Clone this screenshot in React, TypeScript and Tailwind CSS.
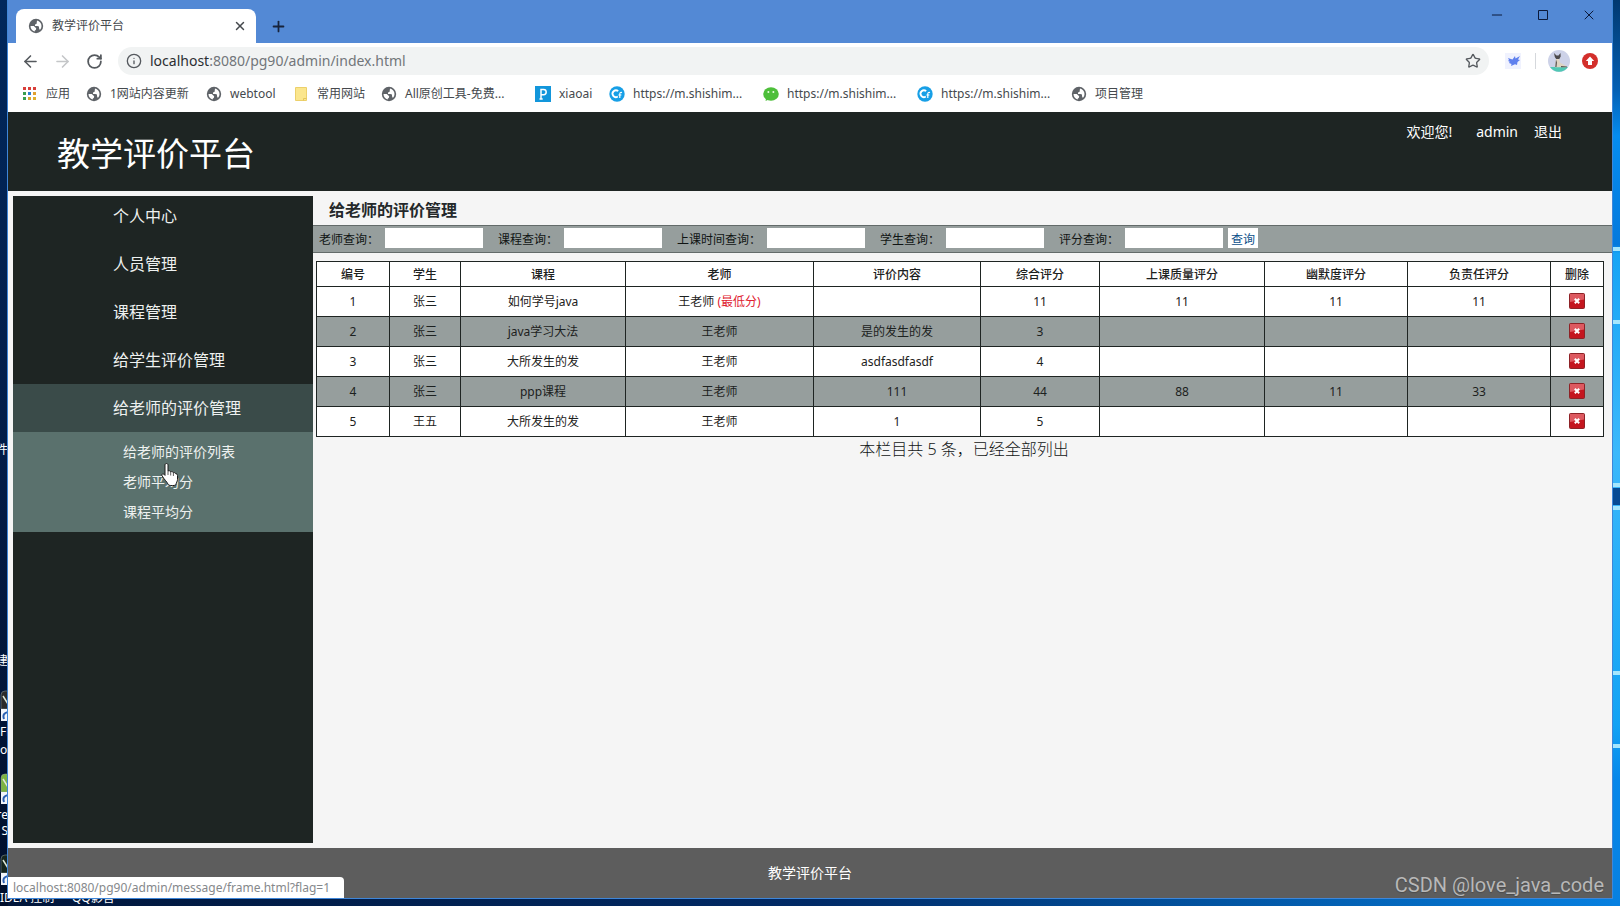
import React from 'react';
import { ArrowLeft, ArrowRight, Info, Minus, Plus, RotateCw, Star, X } from 'lucide-react';

type Bookmark = { label: string; icon: 'globe' | 'folder' | 'p' | 'c' | 'chat'; className: string };

const bookmarks: Bookmark[] = [
  { label: '1网站内容更新', icon: 'globe', className: 'w-[120px]' },
  { label: 'webtool', icon: 'globe', className: 'w-[87px]' },
  { label: '常用网站', icon: 'folder', className: 'w-[88px]' },
  { label: 'All原创工具-免费...', icon: 'globe', className: 'w-[154px]' },
  { label: 'xiaoai', icon: 'p', className: 'w-[74px]' },
  { label: 'https://m.shishim...', icon: 'c', className: 'w-[154px]' },
  { label: 'https://m.shishim...', icon: 'chat', className: 'w-[154px]' },
  { label: 'https://m.shishim...', icon: 'c', className: 'w-[154px]' },
  { label: '项目管理', icon: 'globe', className: 'w-[100px]' },
];

const menu = ['个人中心', '人员管理', '课程管理', '给学生评价管理', '给老师的评价管理'];
const submenu = ['给老师的评价列表', '老师平均分', '课程平均分'];
const filters = ['老师查询：', '课程查询：', '上课时间查询：', '学生查询：', '评分查询：'];

const columns = [
  { title: '编号', width: 'w-[73px]' },
  { title: '学生', width: 'w-[71px]' },
  { title: '课程', width: 'w-[165px]' },
  { title: '老师', width: 'w-[188px]' },
  { title: '评价内容', width: 'w-[167px]' },
  { title: '综合评分', width: 'w-[119px]' },
  { title: '上课质量评分', width: 'w-[165px]' },
  { title: '幽默度评分', width: 'w-[143px]' },
  { title: '负责任评分', width: 'w-[143px]' },
  { title: '删除', width: 'w-[53px]' },
];

const rows = [
  { cells: ['1', '张三', '如何学号java', '王老师', '', '11', '11', '11', '11'], lowest: true },
  { cells: ['2', '张三', 'java学习大法', '王老师', '是的发生的发', '3', '', '', ''] },
  { cells: ['3', '张三', '大所发生的发', '王老师', 'asdfasdfasdf', '4', '', '', ''] },
  { cells: ['4', '张三', 'ppp课程', '王老师', '111', '44', '88', '11', '33'] },
  { cells: ['5', '王五', '大所发生的发', '王老师', '1', '5', '', '', ''] },
];

const GlobeIcon = () => (
  <svg viewBox="0 0 16 16" className="size-4 shrink-0">
    <circle cx="8" cy="8" r="7.2" fill="#5f6368" />
    <path d="M2.5 8h3.3l2.400 2.200-.4 1.800-1 .6v1C4.200 13 2.500 10.700 2.500 8Z" fill="#fff" />
    <path d="M9 2.600c2.600.5 4.500 2.700 4.500 5.400 0 1.500-.6 2.900-1.600 3.900l-.9-1.700V8.600L9.200 8H7V6.400l1.600-.6Z" fill="#fff" />
  </svg>
);

const BookmarkIcon = ({ kind }: { kind: Bookmark['icon'] }) => {
  if (kind === 'globe') return <GlobeIcon />;
  if (kind === 'folder') {
    return (
      <svg viewBox="0 0 16 16" className="size-4 shrink-0">
        <path d="M2.5 1.5h11v13h-11z" fill="#fbe68d" stroke="#ecd06b" />
        <path d="M10.5 14.5v-2h3" fill="none" stroke="#e5c65c" />
      </svg>
    );
  }
  if (kind === 'p') {
    return (
      <svg viewBox="0 0 16 16" className="size-4 shrink-0">
        <rect width="16" height="16" fill="#1296db" />
        <path d="M6 13V3.5h2.6a2.6 2.6 0 0 1 0 5.2H6M4.5 13h3.2" fill="none" stroke="#fff" strokeWidth="1.5" />
      </svg>
    );
  }
  if (kind === 'c') {
    return (
      <svg viewBox="0 0 16 16" className="size-4 shrink-0">
        <circle cx="8" cy="8" r="7.7" fill="#179fe6" />
        <path d="M9.2 5.2A3.4 3.4 0 1 0 8.8 10.6" fill="none" stroke="#fff" strokeWidth="1.8" />
        <path d="M13 6.6c-1.6-.6-2.2.2-2.2 1.4v4M9.4 9h3" fill="none" stroke="#fff" strokeWidth="1.2" />
      </svg>
    );
  }
  return (
    <svg viewBox="0 0 16 16" className="size-4 shrink-0">
      <ellipse cx="8" cy="8" rx="7.8" ry="6.8" fill="#4dbf3a" />
      <path d="m3 12-.4 3 3-1.4Z" fill="#4dbf3a" />
      <circle cx="5.4" cy="6" r="1" fill="#e8ffe0" />
      <circle cx="10.4" cy="6" r="1" fill="#e8ffe0" />
    </svg>
  );
};

const AppsIcon = () => {
  const colors = ['#d93f3a', '#d93f3a', '#d93f3a', '#3a9e4f', '#2d7fd0', '#e0a030', '#3a9e4f', '#d9a62e', '#e0b02e'];
  return (
    <svg viewBox="0 0 14 14" className="size-[14px] shrink-0">
      {colors.map((color, i) => (
        <rect key={i} x={(i % 3) * 5} y={Math.floor(i / 3) * 5} width="3" height="3" fill={color} />
      ))}
    </svg>
  );
};

const DeleteIcon = () => (
  <svg viewBox="0 0 16 16" className="size-4">
    <rect x="0.5" y="0.5" width="15" height="15" rx="1" fill="#c4161f" stroke="#8d2226" />
    <path d="M1 1h14v5.5L1 9z" fill="#dd5960" />
    <path d="m5.8 5.8 4.4 4.4m0-4.4-4.4 4.4" stroke="#fff" strokeWidth="2" />
  </svg>
);

const ShortcutIcon = ({ fill }: { fill: string }) => (
  <svg viewBox="0 0 8 32" className="h-8 w-2">
    <path d="M1 5a4 4 0 0 1 4-4h3v18H1Z" fill={fill} stroke="#8fa0a0" strokeWidth="0.5" />
    <path d="m3 6 5 8" stroke="#dfe8d8" strokeWidth="1.5" />
    <rect x="1" y="19" width="7" height="12" fill="#f2f5fa" />
    <path d="M4 29c-1.5-4 0-6 4-7" fill="none" stroke="#2b5fb0" strokeWidth="2" />
  </svg>
);

// Desktop behind the browser window, only its edges stay visible
const Desktop = () => (
  <div className="absolute inset-0 overflow-hidden bg-linear-to-r from-[#01163a] via-[#012a66] to-[#0780e0] text-xs leading-4 whitespace-nowrap text-white">
    <div className="absolute inset-y-0 left-0 w-2 overflow-hidden bg-linear-to-b from-[#01285c] via-[#011c48] to-[#010f2b]">
      <span className="absolute right-0 top-[442px]">件</span>
      <span className="absolute right-0 top-[653px]">建</span>
      <div className="absolute left-0 top-[690px]"><ShortcutIcon fill="#2b2a2a" /></div>
      <span className="absolute left-0 top-[724px]">Fr</span>
      <span className="absolute left-0 top-[742px]">o</span>
      <div className="absolute left-0 top-[773px]"><ShortcutIcon fill="#7cb342" /></div>
      <span className="absolute right-0 top-[807px]">re</span>
      <span className="absolute right-0 top-[823px]">S</span>
      <div className="absolute left-0 top-[854px]"><ShortcutIcon fill="#16251d" /></div>
    </div>
    <span className="absolute bottom-0 left-0">IDEA 控制</span>
    <span className="absolute bottom-0 left-[72px]">QQ影音</span>
    <svg viewBox="0 0 8 906" preserveAspectRatio="none" className="absolute right-0 top-0 h-full w-2">
      <defs>
        <linearGradient id="sky" x1="0" y1="0" x2="0" y2="1">
          <stop offset="0" stopColor="#01386f" />
          <stop offset="0.1" stopColor="#0460b4" />
          <stop offset="0.15" stopColor="#058cf0" />
          <stop offset="0.27" stopColor="#0579dc" />
          <stop offset="0.28" stopColor="#16a4f5" />
          <stop offset="0.5" stopColor="#3cb8fb" />
          <stop offset="0.8" stopColor="#12a2f4" />
          <stop offset="0.86" stopColor="#0787ea" />
          <stop offset="1" stopColor="#0780e0" />
        </linearGradient>
      </defs>
      <rect width="8" height="906" fill="url(#sky)" />
      <path d="M0 249h8M0 322h8M0 485h8M0 508h8M0 673h8M0 746h8" stroke="#a5e6fd" strokeWidth="4" />
      <rect y="488" width="8" height="17" fill="#064a94" />
    </svg>
  </div>
);

const TitleBar = () => (
  <div className="flex h-[43px] items-end bg-[#5389d5] pl-2">
    <div className="flex h-[34px] w-60 items-center rounded-t-lg bg-white pl-3 pr-2 text-xs text-[#45494d]">
      <GlobeIcon />
      <span className="ml-2 flex-1">教学评价平台</span>
      <button aria-label="关闭标签页" className="flex size-4 items-center justify-center">
        <X size={14} strokeWidth={2.5} />
      </button>
    </div>
    <button aria-label="新标签页" className="ml-3 flex h-[34px] w-5 items-center justify-center text-[#17233b]">
      <Plus size={17} strokeWidth={2.5} />
    </button>
    <div className="ml-auto flex h-[30px] self-start text-[#0c1a3a]">
      <button aria-label="最小化" className="flex w-[46px] items-center justify-center">
        <Minus size={16} strokeWidth={1.5} />
      </button>
      <button aria-label="最大化" className="flex w-[46px] items-center justify-center">
        <svg viewBox="0 0 10 10" className="size-[10px]"><path d="M.5.5h9v9h-9z" fill="none" stroke="currentColor" /></svg>
      </button>
      <button aria-label="关闭" className="flex w-[46px] items-center justify-center">
        <X size={16} strokeWidth={1.5} />
      </button>
    </div>
  </div>
);

const Toolbar = () => (
  <div className="flex h-9 items-center bg-white pl-3 pr-[14px] text-[#55595e]">
    <button aria-label="后退" className="flex w-5 justify-center"><ArrowLeft size={19} /></button>
    <button aria-label="前进" className="ml-3 flex w-5 justify-center text-[#c4c6c8]"><ArrowRight size={19} /></button>
    <button aria-label="重新加载" className="ml-3 flex w-5 justify-center"><RotateCw size={17} strokeWidth={2.5} /></button>
    <div className="ml-[14px] flex h-7 flex-1 items-center rounded-full bg-[#f1f3f3] px-2">
      <Info size={16} />
      <p className="ml-2 flex-1 text-sm text-[#72767a]">
        <span className="text-[#2b2e31]">localhost</span>:8080/pg90/admin/index.html
      </p>
      <button aria-label="收藏"><Star size={16} /></button>
    </div>
    <svg viewBox="0 0 16 16" className="ml-4 size-4">
      <rect width="16" height="16" fill="#f0f2fe" />
      <path d="m3 5 4.500 1.500L10 3l.5 2.500L15 3l-2 3.500 2 .5-2.500 2-.5 3-2-.8L6 13l.5-2L4 10l.8-1.200L3 8l1-1Z" fill="#5f80ee" />
    </svg>
    <div className="ml-[14px] h-4 w-px bg-[#d5d8dc]" />
    <svg viewBox="0 0 22 22" className="ml-3 size-[22px]">
      <circle cx="11" cy="11" r="11" fill="#cdd2e8" />
      <path d="M2 17h18A11 11 0 0 1 2 17Z" fill="#4fc8b4" />
      <path d="m6 3 2.500 2.500h2L12.500 3l.2 3.500L11 9.500H8.500L6.800 7Z" fill="#4c4a4c" />
      <path d="M8 9h3.200l.8 3.500 6 3.500v1.200H7Z" fill="#ded4c2" />
      <path d="m8 9.500 1 3-.5 4.500H7.300ZM13 16l6 .5v.8h-6Z" fill="#5a5552" />
    </svg>
    <svg viewBox="0 0 16 16" className="ml-3 size-4">
      <circle cx="8" cy="8" r="8" fill="#d32f2b" />
      <path d="m8 3.500 4.200 4.500H10v4H6V8H3.800Z" fill="#fff" />
    </svg>
  </div>
);

const BookmarkBar = () => (
  <nav className="flex h-[33px] items-center bg-white pl-[15px] pb-1 text-xs text-[#45494d]">
    <a href="#apps" className="flex w-[63px] items-center gap-[9px] whitespace-nowrap">
      <AppsIcon />
      应用
    </a>
    {bookmarks.map((item, i) => (
      <a key={i} href="#bookmark" className={`flex shrink-0 items-center gap-2 whitespace-nowrap ${item.className}`}>
        <BookmarkIcon kind={item.icon} />
        {item.label}
      </a>
    ))}
  </nav>
);

const Sidebar = () => (
  <nav className="relative w-[300px] shrink-0 bg-[#1e2523] text-base text-[#eef1f0]">
    {menu.map((item, i) => (
      <a
        key={item}
        href="#menu"
        className={`flex items-center pl-[100px] ${i === 0 ? 'h-11 pb-1' : 'h-12'} ${i === 4 ? 'bg-[#3a4b49]' : ''}`}
      >
        {item}
      </a>
    ))}
    <div className="bg-[#5a716d] py-[5px] text-sm">
      {submenu.map((item) => (
        <a key={item} href="#submenu" className="flex h-[30px] items-center pl-[110px]">{item}</a>
      ))}
    </div>
    <svg viewBox="0 0 17 23" className="absolute left-[148px] top-[267px] h-[23px] w-[17px]">
      <path
        d="M5.500.5c.9 0 1.500.6 1.500 1.600V8c.9-.5 2.400-.3 2.700.8 1-.5 2.400-.1 2.700.9 1-.4 2.200.1 2.500 1.200 1-.1 1.600.5 1.600 1.600v4c0 2-1.300 3-1.700 5.500-2 .8-5 .8-7.400 0C6.500 19 3 16.500 1 12.600c-.7-1.400 1-2.400 2-1.300l1 1.100V2.100C4 1.100 4.600.5 5.500.5Z"
        fill="#fff"
        stroke="#1a1a1a"
      />
      <path d="M7 8v4M9.700 9v3.500M12.400 10v3" stroke="#333" strokeWidth="0.8" />
    </svg>
  </nav>
);

const FilterBar = () => (
  <form className="flex h-7 items-start border-y border-[#636b6a] bg-[#969e9d] pl-[6px] pt-[2px] text-xs leading-6 text-[#101413]">
    {filters.map((label) => (
      <label key={label} className="mr-[15px] flex items-start gap-[6px] whitespace-nowrap last-of-type:mr-[5px]">
        {label}
        <input type="text" className="h-5 w-[98px] bg-white" />
      </label>
    ))}
    <button type="button" className="h-5 w-[30px] bg-white leading-6 text-[#0b4f8a]">查询</button>
  </form>
);

const ReviewTable = () => (
  <table className="w-full table-fixed border-collapse bg-white text-center text-xs text-[#1c2120]">
    <thead>
      <tr className="h-[25px]">
        {columns.map((col) => (
          <th key={col.title} className={`border border-[#1e2422] p-0 pt-px font-medium ${col.width}`}>{col.title}</th>
        ))}
      </tr>
    </thead>
    <tbody>
      {rows.map((row, r) => (
        <tr key={r} className="h-[30px] even:bg-[#969e9d]">
          {row.cells.map((cell, c) => (
            <td key={c} className="border border-[#1e2422] p-0">
              {cell}
              {row.lowest && c === 3 && <span className="text-[#e02030]"> (最低分)</span>}
            </td>
          ))}
          <td className="border border-[#1e2422] p-0 pb-[2px]">
            <button aria-label="删除" className="mx-auto block"><DeleteIcon /></button>
          </td>
        </tr>
      ))}
    </tbody>
  </table>
);

const App = () => {
  return (
    <div className="relative flex min-h-screen flex-col px-2 pb-2 font-[Noto_Sans,Noto_Sans_CJK_SC,sans-serif]">
      <Desktop />
      <div className="relative flex flex-1 flex-col bg-[#f5f5f5] shadow-[0_0_0_1px_#3f86d8]">
        <TitleBar />
        <Toolbar />
        <BookmarkBar />

        <header className="flex h-[79px] items-start justify-between bg-[#1e2523] pl-[49px] pr-[50px] text-white">
          <h1 className="pt-[17px] text-[33px] leading-[50px]">教学评价平台</h1>
          <div className="flex pt-[9px] text-sm leading-[22px]">
            <span>欢迎您!</span>
            <span className="ml-6">admin</span>
            <a href="#logout" className="ml-4">退出</a>
          </div>
        </header>

        <div className="flex flex-1 py-[5px] pl-[5px]">
          <Sidebar />
          <main className="min-w-0 flex-1">
            <h2 className="pl-4 pt-px pb-[2px] text-base font-semibold leading-[26px] text-[#24282a]">给老师的评价管理</h2>
            <FilterBar />
            <div className="pl-[3px] pr-2 pt-2">
              <ReviewTable />
              <p className="pl-2 text-center text-base leading-6 font-light text-[#111414]">本栏目共 5 条，已经全部列出</p>
            </div>
          </main>
        </div>

        <footer className="relative flex h-[50px] items-center justify-center bg-[#5d5d5d] text-sm text-white">
          教学评价平台
          <div className="absolute bottom-0 left-0 h-[21px] rounded-tr bg-white pl-[5px] pr-[14px] text-xs leading-[21px] text-[#85888b]">
            localhost:8080/pg90/admin/message/frame.html?flag=1
          </div>
          <div className="absolute bottom-0 right-2 font-[Roboto,sans-serif] text-xl leading-[26px] text-[#b8b8b8] text-shadow-xs">
            CSDN @love_java_code
          </div>
        </footer>
      </div>
    </div>
  );
};

export default App;
